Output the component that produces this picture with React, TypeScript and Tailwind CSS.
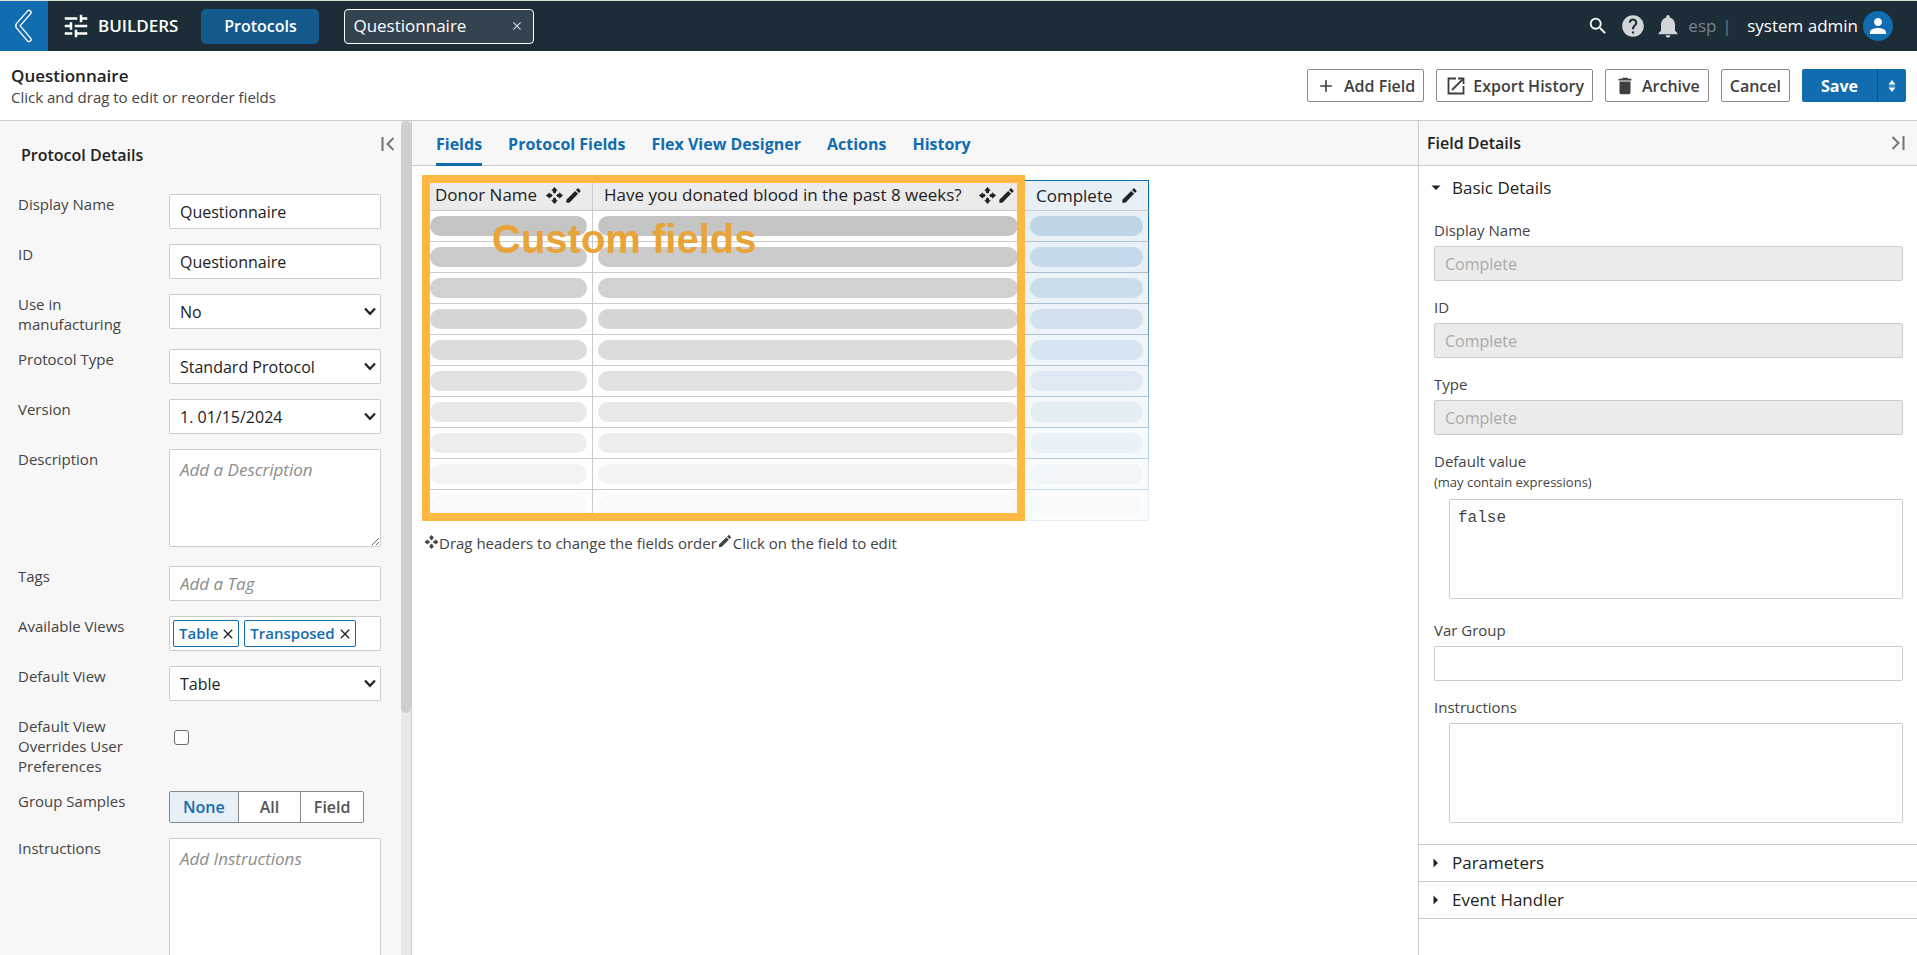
import { useState } from 'react';
import type { ReactNode } from 'react';
import {
  MdAdd,
  MdClose,
  MdDelete,
  MdEdit,
  MdHelp,
  MdNotifications,
  MdPerson,
  MdSearch,
  MdTune,
} from 'react-icons/md';

const inputClass =
  'block w-full h-[35px] rounded-[2px] border border-[#cccccc] bg-white px-[10px] text-base text-[#222222] placeholder:text-[17px] placeholder:italic placeholder:text-[#8c8c8c]';
const areaClass =
  'block w-full rounded-[2px] border border-[#cccccc] bg-white px-[10px] py-[7px] text-base text-[#222222] placeholder:text-[17px] placeholder:italic placeholder:text-[#8c8c8c]';
const outlineButton =
  'flex h-[33px] items-center rounded-[2px] border border-[#8a8a8a] bg-white text-base font-semibold text-[#3f3f3f]';

const tabs = ['Fields', 'Protocol Fields', 'Flex View Designer', 'Actions', 'History'];

// bottom border of each placeholder row in the selected column
const selectedLines = [
  '#b3c4d2',
  '#a8bccd',
  '#a8bfd2',
  '#a9c1d4',
  '#a9c3d7',
  '#a9c5db',
  '#aec9de',
  '#b9d0e2',
  '#c9dbe9',
  '#e6eef4',
];

function BackIcon() {
  return (
    <svg width="20" height="36" viewBox="0 0 20 36" fill="none" strokeLinecap="round">
      <path d="M15 4.500 4 17M4 18.500 15 31.500" stroke="#ffffff" strokeWidth="5.500" />
      <path d="M15 4.500 4 17" stroke="#116cb0" strokeWidth="2.800" />
      <path d="M4 18.500 15 31.500" stroke="#116cb0" strokeWidth="2.800" />
    </svg>
  );
}

function MoveIcon({ className }: { className: string }) {
  return (
    <svg className={className} viewBox="0 0 18 18" fill="currentColor">
      <path d="M9 0 12.500 4H10.800V5.500L9 7.200 7.200 5.500V4H5.500z" />
      <path d="M18 9 14 12.500V10.800H12.500L10.800 9 12.500 7.200H14V5.500z" />
      <path d="M9 18 5.500 14H7.200V12.500L9 10.800 10.800 12.500V14H12.500z" />
      <path d="M0 9 4 5.500V7.200H5.500L7.200 9 5.500 10.800H4V12.500z" />
    </svg>
  );
}

function ExportIcon() {
  return (
    <svg width="18" height="18" viewBox="0 0 18 18" fill="none" stroke="currentColor" strokeWidth="1.800">
      <path d="M9 1.500H1.500V16.500H16.500V9" />
      <path d="M5 13 16 2" />
      <path d="M11 1.500H16.500V7" />
    </svg>
  );
}

function CollapseIcon({ flip }: { flip?: boolean }) {
  return (
    <svg
      className={flip ? 'rotate-180' : ''}
      width="14"
      height="14"
      viewBox="0 0 14 14"
      fill="none"
      stroke="#757575"
      strokeWidth="2"
    >
      <path d="M1.500 0V14M12.500 1 6.500 7 12.500 13" />
    </svg>
  );
}

function Row({ label, id, children }: { label: string; id: string; children: ReactNode }) {
  return (
    <div className="flex items-start">
      <label htmlFor={id} className="w-[151px] shrink-0 pr-8 text-[15px] leading-5 text-[#444444]">
        {label}
      </label>
      <div className="min-w-0 flex-1">{children}</div>
    </div>
  );
}

function Select({ id, value }: { id: string; value: string }) {
  return (
    <div className="relative">
      <select id={id} defaultValue={value} className={`${inputClass} appearance-none`}>
        <option>{value}</option>
      </select>
      <svg
        className="pointer-events-none absolute right-[5px] top-[13px]"
        width="12"
        height="9"
        viewBox="0 0 12 9"
        fill="none"
        stroke="#222222"
        strokeWidth="2.200"
      >
        <path d="M1 1.500 6 6.800 11 1.500" />
      </svg>
    </div>
  );
}

function ViewChip({ name }: { name: string }) {
  return (
    <span className="flex h-[27px] items-center gap-[2px] rounded-[2px] border border-[#116cb0] bg-white pl-[5px] pr-[2px] text-[15px] font-semibold text-[#116cb0]">
      {name}
      <button type="button" aria-label={`Remove ${name}`} className="text-[#222222]">
        <MdClose className="h-4 w-4" />
      </button>
    </span>
  );
}

function TopBar() {
  return (
    <header className="flex h-[51px] shrink-0 items-center border-t border-[#dbe5dc] bg-[#1c2d38] pr-6 text-white">
      <a href="#" aria-label="Back" className="flex h-full w-12 items-center justify-center bg-[#116cb0]">
        <BackIcon />
      </a>
      <div className="ml-[13px] flex items-center gap-[7px] text-[17px] font-semibold">
        <MdTune className="h-[30px] w-[30px]" />
        BUILDERS
      </div>
      <button type="button" className="ml-[23px] h-[35px] w-[118px] rounded-[5px] bg-[#14598c] text-base font-semibold">
        Protocols
      </button>
      <div className="ml-[25px] flex h-[35px] w-[190px] items-center justify-between rounded-[4px] border border-white bg-[#33434f] pl-2 pr-[9px] text-[17px]">
        Questionnaire
        <button type="button" aria-label="Close tab" className="text-[#d5dade]">
          <MdClose className="h-[14px] w-[14px]" />
        </button>
      </div>
      <div className="ml-auto flex items-center">
        <button type="button" aria-label="Search">
          <MdSearch className="h-[22px] w-[22px]" />
        </button>
        <button type="button" aria-label="Help" className="ml-[11px] text-[#d2d6d9]">
          <MdHelp className="h-[26px] w-[26px]" />
        </button>
        <button type="button" aria-label="Notifications" className="ml-2 text-[#d2d6d9]">
          <MdNotifications className="h-7 w-7" />
        </button>
        <span className="ml-[6px] text-[17px] text-[#77828a]">esp</span>
        <span className="ml-[6px] text-base text-[#77828a]">|</span>
        <span className="ml-4 text-[17px]">system admin</span>
        <span className="ml-[5px] flex h-[30px] w-[30px] items-center justify-center rounded-full bg-[#116cb0]">
          <MdPerson className="h-6 w-6" />
        </span>
      </div>
    </header>
  );
}

function TitleBar() {
  return (
    <div className="flex h-[70px] shrink-0 items-center justify-between border-b border-[#cccccc] px-[11px]">
      <div>
        <h1 className="text-[17px] font-semibold leading-[22px] text-[#222222]">Questionnaire</h1>
        <p className="text-[15px] leading-5 text-[#444444]">Click and drag to edit or reorder fields</p>
      </div>
      <div className="flex items-center gap-3">
        <button type="button" className={`${outlineButton} gap-2 px-2`}>
          <MdAdd className="h-5 w-5" />
          Add Field
        </button>
        <button type="button" className={`${outlineButton} gap-2 pl-[10px] pr-2`}>
          <ExportIcon />
          Export History
        </button>
        <button type="button" className={`${outlineButton} gap-[6px] px-2`}>
          <MdDelete className="h-[22px] w-[22px]" />
          Archive
        </button>
        <button type="button" className={`${outlineButton} px-2`}>
          Cancel
        </button>
        <div className="flex h-[33px] overflow-hidden rounded-[2px] bg-[#116cb0] text-white">
          <button type="button" className="w-[76px] border-r border-[#0c5186] text-base font-bold">
            Save
          </button>
          <button type="button" aria-label="More save options" className="flex w-7 items-center justify-center">
            <svg width="8" height="12" viewBox="0 0 8 12" fill="currentColor">
              <path d="M4 0 7.500 4.500H.5zM4 12 .5 7.500H7.500zM1 5.700H7V6.300H1z" />
            </svg>
          </button>
        </div>
      </div>
    </div>
  );
}

function ProtocolDetails() {
  const [group, setGroup] = useState('None');

  return (
    <aside className="flex w-[412px] shrink-0 border-r border-[#cccccc] bg-[#f7f7f7]">
      <div className="min-w-0 flex-1 overflow-hidden">
        <div className="flex items-start justify-between pl-[21px] pr-[6px] pt-4">
          <h2 className="pt-2 text-base font-semibold leading-5 text-[#222222]">Protocol Details</h2>
          <button type="button" aria-label="Collapse panel">
            <CollapseIcon />
          </button>
        </div>
        <div className="flex flex-col gap-[15px] pl-[18px] pr-5 pt-[29px]">
          <Row label="Display Name" id="display-name">
            <input id="display-name" className={inputClass} defaultValue="Questionnaire" />
          </Row>
          <Row label="ID" id="protocol-id">
            <input id="protocol-id" className={inputClass} defaultValue="Questionnaire" />
          </Row>
          <Row label="Use in manufacturing" id="manufacturing">
            <Select id="manufacturing" value="No" />
          </Row>
          <Row label="Protocol Type" id="protocol-type">
            <Select id="protocol-type" value="Standard Protocol" />
          </Row>
          <Row label="Version" id="version">
            <Select id="version" value="1. 01/15/2024" />
          </Row>
          <Row label="Description" id="description">
            <textarea id="description" placeholder="Add a Description" className={`${areaClass} mb-1 h-[98px]`} />
          </Row>
          <Row label="Tags" id="tags">
            <input id="tags" placeholder="Add a Tag" className={inputClass} />
          </Row>
          <Row label="Available Views" id="views">
            <div
              id="views"
              className="flex h-[35px] items-center gap-[5px] rounded-[2px] border border-[#cccccc] bg-white px-[3px]"
            >
              <ViewChip name="Table" />
              <ViewChip name="Transposed" />
            </div>
          </Row>
          <Row label="Default View" id="default-view">
            <Select id="default-view" value="Table" />
          </Row>
          <Row label="Default View Overrides User Preferences" id="overrides">
            <input
              id="overrides"
              type="checkbox"
              className="ml-[5px] mt-[14px] block h-[15px] w-[15px] appearance-none rounded-[3px] border border-[#6b6b6b] bg-white checked:bg-[#116cb0]"
            />
          </Row>
          <Row label="Group Samples" id="group-samples">
            <div id="group-samples" className="flex w-[195px] overflow-hidden rounded-[2px] border border-[#8a8a8a] bg-white">
              {['None', 'All', 'Field'].map((option) => (
                <button
                  key={option}
                  type="button"
                  onClick={() => setGroup(option)}
                  className={`h-[30px] w-[62px] flex-auto border-l border-[#8a8a8a] text-base font-semibold first:w-[67px] first:border-l-0 ${
                    group === option ? 'bg-[#e7eff7] text-[#116cb0]' : 'text-[#555555]'
                  }`}
                >
                  {option}
                </button>
              ))}
            </div>
          </Row>
          <Row label="Instructions" id="instructions">
            <textarea id="instructions" placeholder="Add Instructions" className={`${areaClass} h-[160px]`} />
          </Row>
        </div>
      </div>
      <div className="w-[10px] shrink-0 bg-[#e9e9e9]">
        <div className="h-[71%] rounded-full bg-[#cfcfcf]" />
      </div>
    </aside>
  );
}

function FieldsTable() {
  return (
    <div className="relative w-[725px]">
      <table className="w-full table-fixed border-separate border-spacing-0">
        <colgroup>
          <col className="w-[169px]" />
          <col />
          <col className="w-[124px]" />
        </colgroup>
        <thead>
          <tr className="h-[31px] text-left text-[17px] leading-6 text-[#222222]">
            <th className="border-b border-r border-[#cccccc] bg-[#ebebeb] py-0 pl-[11px] pr-[9px] font-normal">
              <div className="flex items-center justify-between">
                Donor Name
                <span className="flex items-center gap-px">
                  <MoveIcon className="h-[17px] w-[17px]" />
                  <MdEdit className="h-[19px] w-[19px]" />
                </span>
              </div>
            </th>
            <th className="border-b border-[#cccccc] bg-[#ebebeb] py-0 pl-[11px] pr-[9px] font-normal">
              <div className="flex items-center justify-between whitespace-nowrap">
                Have you donated blood in the past 8 weeks?
                <span className="flex items-center gap-px">
                  <MoveIcon className="h-[17px] w-[17px]" />
                  <MdEdit className="h-[19px] w-[19px]" />
                </span>
              </div>
            </th>
            <th className="border-b border-r border-t border-b-[#cccccc] border-r-[#116cb0] border-t-[#116cb0] bg-[#e7eff7] py-0 pl-[11px] pr-[9px] font-normal">
              <div className="flex items-center justify-between">
                Complete
                <MdEdit className="h-[19px] w-[19px]" />
              </div>
            </th>
          </tr>
        </thead>
        <tbody>
          {selectedLines.map((line, i) => {
            const opacity = (10 - i) / 10;
            return (
              <tr key={line} className="h-[31px]">
                <td className="border-b border-r border-[#cccccc] p-0 pl-[6px] pr-[5px]">
                  <div className="h-5 rounded-full bg-[#c5c5c5]" style={{ opacity }} />
                </td>
                <td className="border-b border-[#cccccc] p-0 pl-[5px] pr-[7px]">
                  <div className="h-5 rounded-full bg-[#c5c5c5]" style={{ opacity }} />
                </td>
                <td
                  className="border-b border-r p-0"
                  style={{ borderBottomColor: line, borderRightColor: `rgba(17, 108, 176, ${opacity})` }}
                >
                  <div className="bg-[#e7eff7] px-[5px] py-[5px]" style={{ opacity }}>
                    <div className="h-5 rounded-full bg-[#bed5e8]" />
                  </div>
                </td>
              </tr>
            );
          })}
        </tbody>
      </table>
      {/* highlight around the custom columns */}
      <div className="pointer-events-none absolute -left-[2px] -top-[5px] bottom-0 right-[124px] border-8 border-[#ffb841] pl-[62px] pt-[33px]">
        <span className="block font-['Liberation_Sans',Arial,sans-serif] text-[40px] font-bold leading-[46px] text-[#e8a437]">
          Custom fields
        </span>
      </div>
    </div>
  );
}

function FieldsPanel() {
  const [active, setActive] = useState('Fields');

  return (
    <main className="min-w-0 flex-1 overflow-hidden">
      <nav className="flex h-[45px] gap-[26px] border-b border-[#cccccc] bg-[#f7f7f7] pl-6">
        {tabs.map((tab) => (
          <button
            key={tab}
            type="button"
            onClick={() => setActive(tab)}
            className={`-mb-px border-b-[3px] pt-[3px] text-base font-bold text-[#116cb0] ${
              active === tab ? 'border-[#116cb0]' : 'border-transparent'
            }`}
          >
            {tab}
          </button>
        ))}
      </nav>
      <div className="pl-3 pt-[14px]">
        <FieldsTable />
        <p className="mt-3 flex items-start text-[15px] leading-5 text-[#444444]">
          <MoveIcon className="mt-[2px] h-[14px] w-[15px]" />
          Drag headers to change the fields order
          <MdEdit className="h-4 w-4" />
          Click on the field to edit
        </p>
      </div>
    </main>
  );
}

function DetailField({ label, id, hint, children }: { label: string; id: string; hint?: string; children: ReactNode }) {
  return (
    <div>
      <label htmlFor={id} className="mb-[6px] block text-[15px] leading-5 text-[#444444]">
        {label}
        {hint && <span className="block text-[13px] leading-[22px]">{hint}</span>}
      </label>
      {children}
    </div>
  );
}

function Caret({ open }: { open?: boolean }) {
  return (
    <svg className={open ? 'rotate-90' : ''} width="10" height="10" viewBox="0 0 10 10" fill="#222222">
      <path d="M2.500.5 7 5 2.500 9.500z" />
    </svg>
  );
}

function FieldDetails() {
  const disabledInput =
    'block w-full h-[35px] rounded-[2px] border border-[#cccccc] bg-[#ebebeb] px-[10px] text-base text-[#aaaaaa]';
  const section = 'flex w-full items-center gap-[11px] pl-3 text-[17px] leading-6 text-[#222222]';

  return (
    <aside className="w-[499px] shrink-0 overflow-hidden border-l border-[#cccccc] bg-white">
      <div className="flex h-[45px] items-center justify-between border-b border-[#cccccc] bg-[#f7f7f7] pl-2 pr-3">
        <h2 className="text-base font-semibold text-[#222222]">Field Details</h2>
        <button type="button" aria-label="Collapse panel">
          <CollapseIcon flip />
        </button>
      </div>
      <div className="border-b border-[#cccccc] pb-[21px] pt-[10px]">
        <button type="button" className={section}>
          <Caret open />
          Basic Details
        </button>
        <div className="flex flex-col gap-4 pl-[15px] pr-[14px] pt-5">
          <DetailField label="Display Name" id="field-name">
            <input id="field-name" disabled className={disabledInput} defaultValue="Complete" />
          </DetailField>
          <DetailField label="ID" id="field-id">
            <input id="field-id" disabled className={disabledInput} defaultValue="Complete" />
          </DetailField>
          <DetailField label="Type" id="field-type">
            <input id="field-type" disabled className={disabledInput} defaultValue="Complete" />
          </DetailField>
          <DetailField label="Default value" id="field-default" hint="(may contain expressions)">
            <div className="mb-[5px] pl-[15px]">
              <textarea
                id="field-default"
                defaultValue="false"
                className="block h-[100px] w-full resize-none rounded-[2px] border border-[#cccccc] px-2 py-2 font-['Liberation_Mono',monospace] text-base leading-5 text-[#444444]"
              />
            </div>
          </DetailField>
          <DetailField label="Var Group" id="field-var-group">
            <input id="field-var-group" className={inputClass} />
          </DetailField>
          <DetailField label="Instructions" id="field-instructions">
            <div className="pl-[15px]">
              <textarea id="field-instructions" className={`${areaClass} h-[100px] resize-none`} />
            </div>
          </DetailField>
        </div>
      </div>
      {['Parameters', 'Event Handler'].map((name) => (
        <div key={name} className="border-b border-[#cccccc] py-[6px]">
          <button type="button" className={section}>
            <Caret />
            {name}
          </button>
        </div>
      ))}
    </aside>
  );
}

export default function App() {
  return (
    <div className="flex h-screen flex-col overflow-hidden bg-white font-['Open_Sans','Noto_Sans',sans-serif]">
      <TopBar />
      <TitleBar />
      <div className="flex min-h-0 flex-1">
        <ProtocolDetails />
        <FieldsPanel />
        <FieldDetails />
      </div>
    </div>
  );
}
